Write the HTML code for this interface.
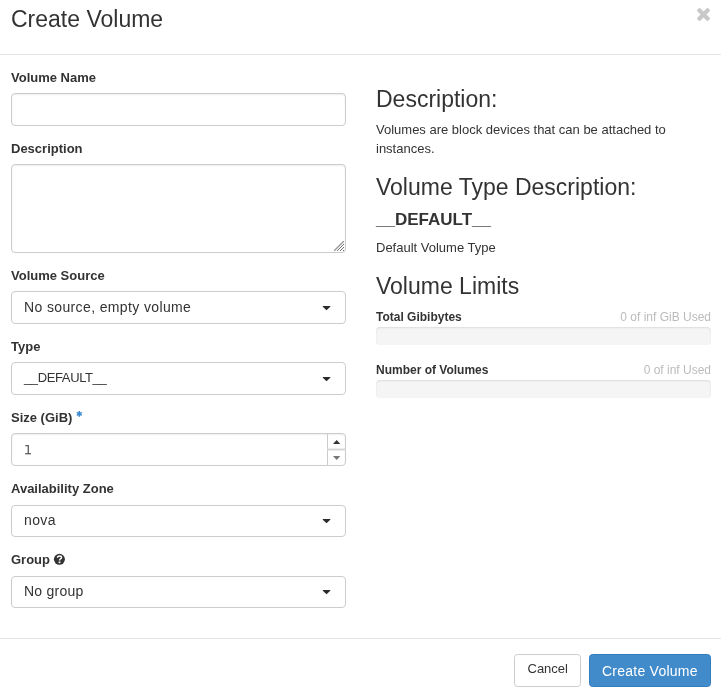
<!DOCTYPE html>
<html><head><meta charset="utf-8">
<style>
*{box-sizing:border-box;margin:0;padding:0}
html,body{width:721px;height:698px;overflow:hidden;background:#fff}
body{font-family:"Liberation Sans",sans-serif;color:#333;position:relative;will-change:transform}
.abs{position:absolute;white-space:nowrap}
.title{left:11px;top:4px;font-size:23px;line-height:30px;color:#333}
.close{position:absolute;left:697px;top:8px;width:13px;height:13px}
.hr{position:absolute;left:0;width:721px;height:1px;background:#e5e5e5}
.lbl{position:absolute;left:11px;font-size:13px;font-weight:bold;line-height:16px;color:#333;white-space:nowrap}
.inp{position:absolute;left:11px;width:335px;height:33px;border:1px solid #ccc;border-radius:4px;background:#fff;box-shadow:inset 0 1px 2px rgba(0,0,0,.07)}
.sel{position:absolute;left:11px;width:335px;height:33px;border:1px solid #ccc;border-radius:4px;background:#fff}
.sel span{position:absolute;left:12px;top:6px;font-family:"Liberation Sans",sans-serif;font-size:14px;line-height:18px;color:#333;white-space:nowrap}
.caret{position:absolute;left:309px;top:12.5px;width:10px;height:7px}
.h3{position:absolute;left:376px;font-size:23px;line-height:26px;color:#333;white-space:nowrap}
.p{position:absolute;left:376px;font-size:13px;line-height:19px;color:#333}
.bar{position:absolute;left:376px;width:335px;height:18px;background:#f5f5f5;border-radius:4px;box-shadow:inset 0 1px 2px rgba(0,0,0,.1)}
.small{position:absolute;font-size:12px;line-height:14px;white-space:nowrap}
.btn{position:absolute;top:654px;height:33px;border-radius:3.5px}
</style></head><body>
<div class="abs title">Create Volume</div>
<svg class="close" viewBox="110 258 1188 1188"><path fill="#c9c9c9" d="M1298 1214q0 40-28 68l-136 136q-28 28-68 28t-68-28l-294-294-294 294q-28 28-68 28t-68-28l-136-136q-28-28-28-68t28-68l294-294-294-294q-28-28-28-68t28-68l136-136q28-28 68-28t68 28l294 294 294-294q28-28 68-28t68 28l136 136q28 28 28 68t-28 68l-294 294 294 294q28 28 28 68z"/></svg>
<div class="hr" style="top:54px"></div>

<div class="lbl" style="top:70px">Volume Name</div>
<div class="inp" style="top:93px"></div>

<div class="lbl" style="top:141px">Description</div>
<div class="inp" style="top:164px;height:89px"></div>
<svg class="abs" style="left:333px;top:240px" width="12" height="12" viewBox="0 0 12 12" shape-rendering="crispEdges">
<path d="M1.2 10.8L10.8 1.2" stroke="#9a9a9a" stroke-width="1.4" shape-rendering="auto"/>
<g fill="#6f6f6f"><rect x="4" y="10" width="1" height="1"/><rect x="5" y="9" width="1" height="1"/><rect x="6" y="8" width="1" height="1"/><rect x="7" y="7" width="1" height="1"/><rect x="8" y="6" width="1" height="1"/><rect x="9" y="5" width="1" height="1"/><rect x="10" y="4" width="1" height="1"/>
<rect x="7" y="10" width="1" height="1"/><rect x="8" y="9" width="1" height="1"/><rect x="9" y="8" width="1" height="1"/><rect x="10" y="7" width="1" height="1"/>
<rect x="10" y="10" width="1" height="1"/></g></svg>

<div class="lbl" style="top:268px">Volume Source</div>
<div class="sel" style="top:291px"><span style="letter-spacing:0.37px">No source, empty volume</span><svg class="caret" viewBox="0 0 10 7"><path d="M1.8 1.1H9.3V1.7L5.55 5.3L1.8 1.7Z" fill="#2b2b2b"/></svg></div>

<div class="lbl" style="top:339px">Type</div>
<div class="sel" style="top:362px"><span style="font-size:13px;letter-spacing:-0.38px">__DEFAULT__</span><svg class="caret" viewBox="0 0 10 7"><path d="M1.8 1.1H9.3V1.7L5.55 5.3L1.8 1.7Z" fill="#2b2b2b"/></svg></div>

<div class="lbl" style="top:410px">Size (GiB)</div>
<svg class="abs" style="left:75px;top:410px" width="9" height="8" viewBox="0 0 9 8"><g stroke="#3b8ad0" stroke-width="1.5" stroke-linecap="butt"><path d="M4.3 1V6.8"/><path d="M1.8 2.45L6.8 5.35"/><path d="M1.8 5.35L6.8 2.45"/></g></svg>
<div class="inp" style="top:433px"></div>
<svg class="abs" style="left:18px;top:438px" width="20" height="22" viewBox="0 0 20 22"><g stroke="#666" stroke-width="1.4" fill="none"><path d="M7.2 7.6H10.3V15.8"/><path d="M7.2 15.7H13"/></g></svg>
<svg class="abs" style="left:326px;top:433px" width="20" height="33" viewBox="0 0 20 33">
<path d="M1.5 0V33" stroke="#ccc" stroke-width="1"/>
<path d="M1 16.5H20" stroke="#d6d6d6" stroke-width="2"/>
<path d="M7 11H14.3L10.65 7Z" fill="#333"/>
<path d="M7 23H14.3L10.65 27Z" fill="#777"/>
</svg>

<div class="lbl" style="top:481px">Availability Zone</div>
<div class="sel" style="top:505px;height:32px"><span style="letter-spacing:0.37px;top:5px">nova</span><svg class="caret" style="top:11.5px" viewBox="0 0 10 7"><path d="M1.8 1.1H9.3V1.7L5.55 5.3L1.8 1.7Z" fill="#2b2b2b"/></svg></div>

<div class="lbl" style="top:552px">Group</div>
<svg class="abs" style="left:53px;top:553px" width="13" height="13" viewBox="0 0 13 13"><circle cx="6.4" cy="6.3" r="5.5" fill="#333"/><path d="M4.5 4.7Q4.5 2.9 6.5 2.9Q8.5 2.9 8.5 4.5Q8.5 5.4 7.5 5.9Q6.6 6.4 6.6 7.4" stroke="#fff" stroke-width="1.5" fill="none"/><rect x="5.6" y="8.5" width="1.8" height="1.6" fill="#fff"/></svg>
<div class="sel" style="top:576px;height:32px"><span style="letter-spacing:0.25px;top:5px">No group</span><svg class="caret" style="top:11.5px" viewBox="0 0 10 7"><path d="M1.8 1.1H9.3V1.7L5.55 5.3L1.8 1.7Z" fill="#2b2b2b"/></svg></div>

<div class="h3" style="top:86px">Description:</div>
<div class="p" style="top:120px;width:320px">Volumes are block devices that can be attached to<br>instances.</div>
<div class="h3" style="top:174px">Volume Type Description:</div>
<div class="abs" style="left:376px;top:210px;font-size:17px;font-weight:bold;line-height:20px">__DEFAULT__</div>
<div class="p abs" style="top:238px">Default Volume Type</div>
<div class="h3" style="top:273px">Volume Limits</div>
<div class="small" style="left:376px;top:310px;font-weight:bold">Total Gibibytes</div>
<div class="small" style="right:10px;top:310px;color:#bbb">0 of inf GiB Used</div>
<div class="bar" style="top:327px"></div>
<div class="small" style="left:376px;top:363px;font-weight:bold">Number of Volumes</div>
<div class="small" style="right:10px;top:363px;color:#bbb">0 of inf Used</div>
<div class="bar" style="top:380px"></div>

<div class="hr" style="top:638px"></div>
<div class="btn" style="left:514px;width:67px;border:1px solid #ccc;background:#fff"><span class="abs" style="left:12.5px;top:6px;font-size:13px;line-height:16px;color:#333">Cancel</span></div>
<div class="btn" style="left:589px;width:122px;background:#428bca;border:1px solid #357ebd"><span class="abs" style="left:12px;top:7px;font-size:14px;line-height:18px;letter-spacing:0.24px;color:#fff">Create Volume</span></div>
</body></html>
